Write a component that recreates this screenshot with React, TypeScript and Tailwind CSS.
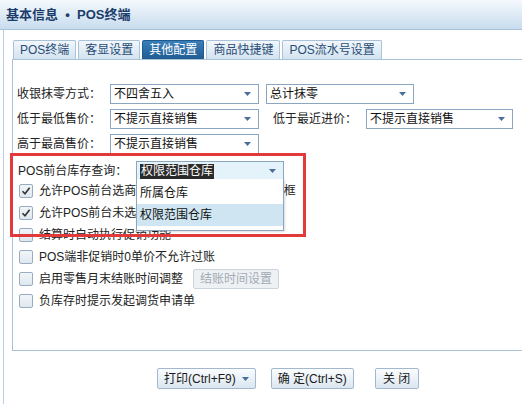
import React from "react";

const font = { fontFamily: '"Liberation Sans", "Noto Sans CJK SC", sans-serif' };

const Arrow = () => (
  <svg width="7" height="4" viewBox="0 0 7 4" className="shrink-0">
    <path d="M0 0h7L3.5 4z" fill="#4a6f9c" />
  </svg>
);

const Select = ({ value, w, active }: { value: string; w: string; active?: boolean }) => (
  <div
    className={`${w} h-[20px] flex items-center justify-between pl-[3px] pr-[7px] border border-[#8aa6c1] ${
      active ? "bg-[#e4f2fa]" : "bg-white"
    }`}
  >
    {active ? (
      <span className="bg-[#2b2b2b] text-white leading-[15px] px-[1px]">{value}</span>
    ) : (
      <span className="text-[#111] leading-[15px]">{value}</span>
    )}
    <Arrow />
  </div>
);

const Check = ({ checked }: { checked?: boolean }) => (
  <div className="w-[14px] h-[14px] shrink-0 rounded-[2px] border border-[#98adc2] bg-gradient-to-b from-[#f1f5f9] to-[#dfe7ef] flex items-center justify-center">
    {checked && (
      <svg width="10" height="10" viewBox="0 0 10 10">
        <path d="M1.5 5.2 4 7.8 8.6 1.8" fill="none" stroke="#333" strokeWidth="1.6" />
      </svg>
    )}
  </div>
);

const CheckRow = ({ label, checked, children }: { label: string; checked?: boolean; children?: React.ReactNode }) => (
  <div className="h-[22px] flex items-center gap-[6px] whitespace-nowrap">
    <Check checked={checked} />
    <span className="text-[#222]">{label}</span>
    {children}
  </div>
);

const Tab = ({ label, active }: { label: string; active?: boolean }) => (
  <div
    className={`h-[19px] px-[6px] flex items-center border border-b-0 rounded-t-[2px] ${
      active
        ? "bg-gradient-to-b from-[#3a7fb9] to-[#1f5c93] border-[#1f5a8e] text-white"
        : "bg-gradient-to-b from-[#f2f7fb] to-[#d3e3f0] border-[#a9c2d8] text-[#2a4d76]"
    }`}
  >
    {label}
  </div>
);

const Btn = ({ children, className = "" }: { children: React.ReactNode; className?: string }) => (
  <div
    className={`h-[21px] flex items-center px-[6px] rounded-[2px] border border-[#a3b8cc] bg-gradient-to-b from-[#fbfdff] to-[#dbe6f0] text-[#1b1b1b] ${className}`}
  >
    {children}
  </div>
);

export default function App() {
  return (
    <div className="w-[522px] h-[404px] bg-white text-[12px] overflow-hidden relative" style={font}>
      {/* Header */}
      <div className="h-[30px] flex items-center pl-[6px] bg-gradient-to-b from-[#f5f9fd] to-[#c8dcee] border-b border-[#a7c3dc]">
        <span className="font-bold text-[13px] text-[#1b3d6b]">基本信息&nbsp;&nbsp;•&nbsp;&nbsp;POS终端</span>
      </div>

      <div className="ml-[3px] border-l border-[#b7cfe4] h-[374px] pt-[10px] pl-[8px]">
        {/* Tabs */}
        <div className="flex items-end gap-[2px] pl-[1px]">
          <Tab label="POS终端" />
          <Tab label="客显设置" />
          <Tab label="其他配置" active />
          <Tab label="商品快捷键" />
          <Tab label="POS流水号设置" />
        </div>

        {/* Panel */}
        <div className="h-[292px] w-[520px] border border-r-0 border-[#a9c2d8] pl-[4px] pt-[24px] relative">
          <div className="flex flex-col gap-[5px]">
            <div className="flex items-center">
              <span className="w-[93px] text-[#222]">收银抹零方式：</span>
              <Select value="不四舍五入" w="w-[149px]" />
              <div className="w-[7px]" />
              <Select value="总计抹零" w="w-[148px]" />
            </div>
            <div className="flex items-center">
              <span className="w-[93px] text-[#222]">低于最低售价：</span>
              <Select value="不提示直接销售" w="w-[149px]" />
              <span className="w-[107px] pl-[14px] text-[#222]">低于最近进价：</span>
              <Select value="不提示直接销售" w="w-[147px]" />
            </div>
            <div className="flex items-center">
              <span className="w-[93px] text-[#222]">高于最高售价：</span>
              <Select value="不提示直接销售" w="w-[149px]" />
            </div>
          </div>

          <div className="flex items-center mt-[7px] pl-[1px]">
            <span className="w-[118px] text-[#222]">POS前台库存查询：</span>
            <Select value="权限范围仓库" w="w-[148px]" active />
          </div>

          <div className="flex flex-col mt-[-1px] pl-[2px]">
            <CheckRow label="允许POS前台选商品时弹出多个仓库 库存选择框" checked />
            <CheckRow label="允许POS前台未选" checked />
            <CheckRow label="结算时自动执行促销功能" />
            <CheckRow label="POS端非促销时0单价不允许过账" />
            <CheckRow label="启用零售月末结账时间调整">
              <div className="ml-[4px] h-[20px] px-[6px] flex items-center rounded-[2px] border border-[#cbd3dc] bg-[#eef1f4] text-[#a3abb4]">
                结账时间设置
              </div>
            </CheckRow>
            <CheckRow label="负库存时提示发起调货申请单" />
          </div>

          {/* Dropdown list */}
          <div className="absolute left-[123px] top-[119px] w-[148px] bg-white border border-[#8aa6c1] border-t-0 shadow-[1px_1px_2px_rgba(0,0,0,0.15)] pt-[3px] pb-[4px]">
            <div className="h-[22px] flex items-center pl-[3px] text-[#111]">所属仓库</div>
            <div className="h-[22px] flex items-center pl-[3px] bg-[#cfe6f2] text-[#111]">权限范围仓库</div>
          </div>

          {/* Red annotation */}
          <div className="absolute left-[-3px] top-[93px] w-[296px] h-[84px] border-[3px] border-[#e23a3a] pointer-events-none" />
        </div>

        {/* Footer buttons */}
        <div className="flex items-center mt-[17px] pl-[145px]">
          <Btn className="gap-[6px]">
            打印(Ctrl+F9)
            <Arrow />
          </Btn>
          <div className="w-[15px]" />
          <Btn>确 定(Ctrl+S)</Btn>
          <div className="w-[21px]" />
          <Btn className="w-[44px] justify-center">关 闭</Btn>
        </div>
      </div>
    </div>
  );
}
